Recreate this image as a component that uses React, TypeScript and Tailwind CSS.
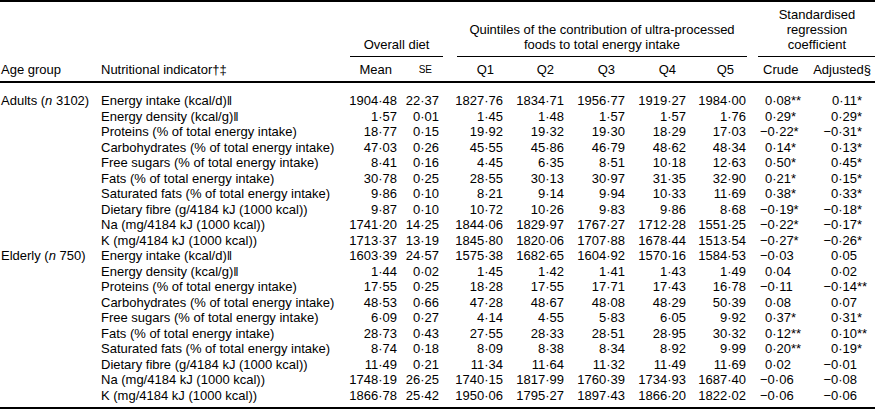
import React from 'react';

type Row = { label: React.ReactNode; vals: string[]; crude: string; adj: string };

const DBL = <span className="inline-block leading-[10px]">‖</span>;

const ADULTS: Row[] = [
  { label: <>Energy intake (kcal/d){DBL}</>, vals: ['1904·48', '22·37', '1827·76', '1834·71', '1956·77', '1919·27', '1984·00'], crude: '0·08**', adj: '0·11*' },
  { label: <>Energy density (kcal/g){DBL}</>, vals: ['1·57', '0·01', '1·45', '1·48', '1·57', '1·57', '1·76'], crude: '0·29*', adj: '0·29*' },
  { label: 'Proteins (% of total energy intake)', vals: ['18·77', '0·15', '19·92', '19·32', '19·30', '18·29', '17·03'], crude: '−0·22*', adj: '−0·31*' },
  { label: 'Carbohydrates (% of total energy intake)', vals: ['47·03', '0·26', '45·55', '45·86', '46·79', '48·62', '48·34'], crude: '0·14*', adj: '0·13*' },
  { label: 'Free sugars (% of total energy intake)', vals: ['8·41', '0·16', '4·45', '6·35', '8·51', '10·18', '12·63'], crude: '0·50*', adj: '0·45*' },
  { label: 'Fats (% of total energy intake)', vals: ['30·78', '0·25', '28·55', '30·13', '30·97', '31·35', '32·90'], crude: '0·21*', adj: '0·15*' },
  { label: 'Saturated fats (% of total energy intake)', vals: ['9·86', '0·10', '8·21', '9·14', '9·94', '10·33', '11·69'], crude: '0·38*', adj: '0·33*' },
  { label: 'Dietary fibre (g/4184 kJ (1000 kcal))', vals: ['9·87', '0·10', '10·72', '10·26', '9·83', '9·86', '8·68'], crude: '−0·19*', adj: '−0·18*' },
  { label: 'Na (mg/4184 kJ (1000 kcal))', vals: ['1741·20', '14·25', '1844·06', '1829·97', '1767·27', '1712·28', '1551·25'], crude: '−0·22*', adj: '−0·17*' },
  { label: 'K (mg/4184 kJ (1000 kcal))', vals: ['1713·37', '13·19', '1845·80', '1820·06', '1707·88', '1678·44', '1513·54'], crude: '−0·27*', adj: '−0·26*' },
];

const ELDERLY: Row[] = [
  { label: <>Energy intake (kcal/d){DBL}</>, vals: ['1603·39', '24·57', '1575·38', '1682·65', '1604·92', '1570·16', '1584·53'], crude: '−0·03', adj: '0·05' },
  { label: <>Energy density (kcal/g){DBL}</>, vals: ['1·44', '0·02', '1·45', '1·42', '1·41', '1·43', '1·49'], crude: '0·04', adj: '0·02' },
  { label: 'Proteins (% of total energy intake)', vals: ['17·55', '0·25', '18·28', '17·55', '17·71', '17·43', '16·78'], crude: '−0·11', adj: '−0·14**' },
  { label: 'Carbohydrates (% of total energy intake)', vals: ['48·53', '0·66', '47·28', '48·67', '48·08', '48·29', '50·39'], crude: '0·08', adj: '0·07' },
  { label: 'Free sugars (% of total energy intake)', vals: ['6·09', '0·27', '4·14', '4·55', '5·83', '6·05', '9·92'], crude: '0·37*', adj: '0·31*' },
  { label: 'Fats (% of total energy intake)', vals: ['28·73', '0·43', '27·55', '28·33', '28·51', '28·95', '30·32'], crude: '0·12**', adj: '0·10**' },
  { label: 'Saturated fats (% of total energy intake)', vals: ['8·74', '0·18', '8·09', '8·38', '8·34', '8·92', '9·99'], crude: '0·20**', adj: '0·19*' },
  { label: 'Dietary fibre (g/4184 kJ (1000 kcal))', vals: ['11·49', '0·21', '11·34', '11·64', '11·32', '11·49', '11·69'], crude: '0·02', adj: '−0·01' },
  { label: 'Na (mg/4184 kJ (1000 kcal))', vals: ['1748·19', '26·25', '1740·15', '1817·99', '1760·39', '1734·93', '1687·40'], crude: '−0·06', adj: '−0·08' },
  { label: 'K (mg/4184 kJ (1000 kcal))', vals: ['1866·78', '25·42', '1950·06', '1795·27', '1897·43', '1866·20', '1822·02'], crude: '−0·06', adj: '−0·06' },
];

// 11 columns: age | indicator | mean | se | q1..q5 | crude | adjusted
const COLS = 'grid grid-cols-[101px_239px_60px_43px_64px_61px_61px_61px_60px_55px_71px]';

// right padding per numeric column so the last digit lands where the reference has it
const VAL_PAD = ['pr-[3px]', 'pr-[4px]', 'pr-[4px]', 'pr-[4px]', 'pr-[4px]', 'pr-[4px]', 'pr-[4px]'];

function Adjusted({ v }: { v: string }) {
  const m = v.match(/^([^*]+)(\**)$/);
  const num = m ? m[1] : v;
  const stars = m ? m[2] : '';
  return (
    <span className="whitespace-nowrap">
      {num}
      <span className="inline-block w-0 text-left">{stars}</span>
    </span>
  );
}

function Group({ name, rows }: { name: React.ReactNode; rows: Row[] }) {
  return (
    <>
      {rows.map((r, i) => (
        <div key={i} className={`${COLS} h-[15.5px] leading-[15.5px] whitespace-nowrap`}>
          <div className="pl-[1px]">{i === 0 ? name : null}</div>
          <div>{r.label}</div>
          {r.vals.map((v, j) => (
            <div key={j} className={`text-right ${VAL_PAD[j]}`}>{v}</div>
          ))}
          <div className={r.crude.startsWith('−') ? 'pl-[10px]' : 'pl-[15px]'}>{r.crude}</div>
          <div className="text-right pr-[19px]"><Adjusted v={r.adj} /></div>
        </div>
      ))}
    </>
  );
}

export default function App() {
  return (
    <div
      className="w-[875px] h-[413px] bg-white text-black text-[13px] leading-[15px] overflow-hidden"
      style={{ fontFamily: '"Liberation Sans", Arial, sans-serif' }}
    >
      {/* header, spanning groups */}
      <div className={`${COLS} border-t-2 border-black pt-[5px] items-end`}>
        <div className="col-start-3 col-span-2 ml-[10px] border-b border-black pb-[4px] text-center">Overall diet</div>
        <div className="col-span-5 ml-[14px] mr-[3px] border-b border-black pb-[4px] text-center">
          Quintiles of the contribution of ultra-processed
          <br />
          foods to total energy intake
        </div>
        <div className="col-span-2 ml-[8px] border-b border-black pb-[4px] text-center">
          Standardised
          <br />
          regression
          <br />
          coefficient
        </div>
      </div>

      {/* header, column labels */}
      <div className={`${COLS} border-b-2 border-black pt-[5px] pb-[4px] whitespace-nowrap items-end`}>
        <div className="pl-[1px]">Age group</div>
        <div>Nutritional indicator†‡</div>
        <div className="text-right pr-[8px]">Mean</div>
        <div className="text-right pr-[11px] text-[10px]">SE</div>
        <div className="text-right pr-[13px]">Q1</div>
        <div className="text-right pr-[14px]">Q2</div>
        <div className="text-right pr-[14px]">Q3</div>
        <div className="text-right pr-[14px]">Q4</div>
        <div className="text-right pr-[16px]">Q5</div>
        <div className="pl-[13px]">Crude</div>
        <div className="text-right pr-[5px]">Adjusted§</div>
      </div>

      {/* body */}
      <div className="pt-[10px] pb-[4px] border-b-2 border-black">
        <Group name={<>Adults (<i>n</i> 3102)</>} rows={ADULTS} />
        <Group name={<>Elderly (<i>n</i> 750)</>} rows={ELDERLY} />
      </div>
    </div>
  );
}
